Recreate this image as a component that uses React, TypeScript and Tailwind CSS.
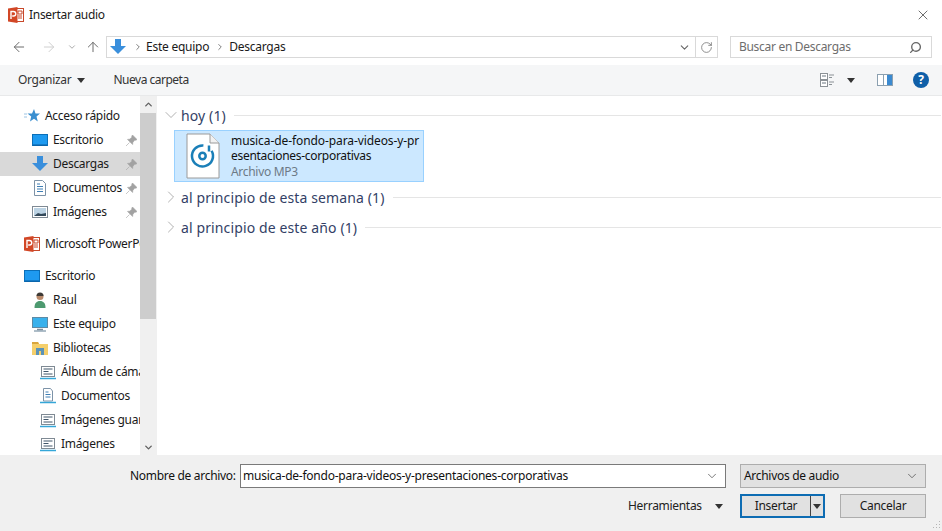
import React from 'react';
import { ArrowLeft, ArrowRight, ArrowUp, ChevronDown, ChevronUp, ChevronRight, RotateCw, Search, X } from 'lucide-react';

const font = { fontFamily: '"Noto Sans", "Liberation Sans", sans-serif' };

const Caret = ({ className = '' }: { className?: string }) => (
  <svg width="8" height="5" viewBox="0 0 8 5" className={`shrink-0 ${className}`}>
    <path d="M0 0h8L4 5z" fill="#333" />
  </svg>
);

const Ico = ({ children, size = 16 }: { children: React.ReactNode; size?: number }) => (
  <svg width={size} height={size} viewBox="0 0 16 16" className="shrink-0">
    {children}
  </svg>
);

const PptIcon = () => (
  <Ico>
    <rect x="7.500" y="1.500" width="8" height="13" fill="#fff" stroke="#c8482a" />
    <path d="M10 4h4v3h-4zM10 9h4M10 11h4" fill="none" stroke="#c8482a" />
    <path d="M0 1.500 9.500 0v16L0 14.500z" fill="#d24726" />
    <path d="M3 12V4.500h2.500a2 2 0 0 1 0 4.500H4.200" fill="none" stroke="#fff" strokeWidth="1.400" />
  </Ico>
);

const DownloadIcon = () => (
  <Ico>
    <path d="M5 0h6v7h5l-8 8-8-8h5z" fill="#3a8fdc" />
  </Ico>
);

const DesktopIcon = () => (
  <Ico>
    <rect x=".5" y="2.500" width="15" height="11" fill="#1e9af0" stroke="#0b6fb8" />
    <path d="M1 13h14" stroke="#0a5c9e" />
  </Ico>
);

const DocIcon = () => (
  <Ico>
    <path d="M2.500.500h8l3 3v12h-11z" fill="#fff" stroke="#7d93a8" />
    <path d="M5 4h3M5 6.500h6M5 9h6M5 11.500h6" stroke="#3f7fb5" />
  </Ico>
);

const PicIcon = () => (
  <Ico>
    <rect x=".5" y="2.500" width="15" height="11" fill="#fff" stroke="#7f8a94" />
    <rect x="2" y="4" width="12" height="8" fill="#bcd3e4" />
    <path d="M2 12l4-3 3 1 5-1v3z" fill="#34495a" />
  </Ico>
);

const LibItemIcon = ({ doc }: { doc?: boolean }) => (
  <Ico>
    {doc ? (
      <path d="M3.500.500h7l2 2.500v10h-9z" fill="#fff" stroke="#7d93a8" />
    ) : (
      <rect x="1.500" y="2.500" width="13" height="10" fill="#fff" stroke="#7f8a94" />
    )}
    {doc ? (
      <path d="M5.500 4h3M5.500 6.500h5M5.500 9h5" stroke="#3f7fb5" />
    ) : (
      <path d="M3.500 5h9M3.500 7.500h5M3.500 10h9" stroke="#40566a" />
    )}
    <path d="M0 14.500h16" stroke="#35a7d8" strokeWidth="1.500" />
  </Ico>
);

const StarIcon = () => (
  <Ico>
    <path d="M10 1l1.500 4.500H16l-3.500 3 1.300 5L10 10.800 6 13.500l1.200-5-3.700-3H8z" fill="#3a8fd0" />
    <path d="M0 6h3M0 9h3" stroke="#9cc4e4" />
  </Ico>
);

const UserIcon = () => (
  <Ico>
    <circle cx="8" cy="4.500" r="3.500" fill="#b98a6b" />
    <path d="M4.500 4a3.500 3.500 0 0 1 7 0z" fill="#3e3a36" />
    <path d="M2.500 16c0-5 2-7 5.500-7s5.500 2 5.500 7z" fill="#4d9a70" />
  </Ico>
);

const PcIcon = () => (
  <Ico>
    <rect x=".5" y="1.500" width="15" height="10" fill="#39b1ec" stroke="#5d8aa5" />
    <path d="M5 13.500h6" stroke="#7c8e9c" strokeWidth="1.500" />
    <path d="M2 15h12" stroke="#5f7c92" />
  </Ico>
);

const LibIcon = () => (
  <Ico>
    <path d="M0 2h6l1 2h9v11H0z" fill="#f5cf6b" />
    <path d="M0 2h6l1 2H0z" fill="#d9a63f" />
    <rect x="4" y="8" width="8" height="7" fill="#5b93b8" />
    <path d="M7 11h2v4H7z" fill="#f5cf6b" />
  </Ico>
);

const PinIcon = () => (
  <svg width="11" height="11" viewBox="0 0 11 11">
    <path d="M6.500 0 11 4.500 9.800 5.300 8.800 5 6.800 7.500 6.600 9.500 1.500 4.400 3.500 4.200 6 2.200 5.700 1.200zM3.500 7.500 0 11" fill="#a2a2a2" stroke="#a2a2a2" strokeWidth=".6" />
  </svg>
);

type NavRow = { label: string; icon: React.ReactNode; level: 0 | 1 | 2; pin?: boolean; active?: boolean; gap?: boolean };

const navRows: NavRow[] = [
  { label: 'Acceso rápido', icon: <StarIcon />, level: 0 },
  { label: 'Escritorio', icon: <DesktopIcon />, level: 1, pin: true },
  { label: 'Descargas', icon: <DownloadIcon />, level: 1, pin: true, active: true },
  { label: 'Documentos', icon: <DocIcon />, level: 1, pin: true },
  { label: 'Imágenes', icon: <PicIcon />, level: 1, pin: true },
  { label: 'Microsoft PowerPoint', icon: <PptIcon />, level: 0, gap: true },
  { label: 'Escritorio', icon: <DesktopIcon />, level: 0, gap: true },
  { label: 'Raul', icon: <UserIcon />, level: 1 },
  { label: 'Este equipo', icon: <PcIcon />, level: 1 },
  { label: 'Bibliotecas', icon: <LibIcon />, level: 1 },
  { label: 'Álbum de cámara', icon: <LibItemIcon />, level: 2 },
  { label: 'Documentos', icon: <LibItemIcon doc />, level: 2 },
  { label: 'Imágenes guardadas', icon: <LibItemIcon />, level: 2 },
  { label: 'Imágenes', icon: <LibItemIcon />, level: 2 },
];

const levelPad = { 0: 'pl-[24px]', 1: 'pl-[32px]', 2: 'pl-[40px]' };

const Group = ({ label, open }: { label: string; open?: boolean }) => (
  <div className="h-[30px] flex items-center">
    <span className="w-[10px] flex justify-center text-[#8a8a8a]">
      {open ? <ChevronDown size={20} strokeWidth={0.8} className="shrink-0" /> : <ChevronRight size={20} strokeWidth={0.8} className="shrink-0" />}
    </span>
    <span className="ml-[5px] text-[14px] text-[#333f66] tracking-[0.12px] whitespace-nowrap">{label}</span>
    <span className="flex-1 ml-[8px] h-px bg-[#e5e5e5]" />
  </div>
);

export default function App() {
  return (
    <div className="w-[942px] h-[531px] bg-white flex flex-col overflow-hidden text-[12px] text-[#1a1a1a] tracking-[-0.3px]" style={font}>
      {/* title */}
      <div className="h-[30px] flex items-center pl-[8px] pr-[11px] shrink-0">
        <PptIcon />
        <span className="ml-[5px]">Insertar audio</span>
        <X size={16} strokeWidth={1} className="ml-auto text-[#222]" />
      </div>

      {/* address row */}
      <div className="h-[35px] flex items-start pt-[6px] pl-[11px] pr-[10px] shrink-0">
        <div className="w-[95px] h-[22px] flex items-center text-[#6d6d6d]">
          <ArrowLeft size={16} strokeWidth={1.500} />
          <ArrowRight size={16} strokeWidth={1.500} className="ml-[14px] text-[#d0d0d0]" />
          <ChevronDown size={10} strokeWidth={2} className="ml-[10px] text-[#9a9a9a]" />
          <ArrowUp size={16} strokeWidth={1.500} className="ml-[8px]" />
        </div>
        <div className="w-[612px] h-[22px] border border-[#d9d9d9] flex items-center pl-[3px]">
          <DownloadIcon />
          <ChevronRight size={10} strokeWidth={2} className="ml-[7px] text-[#666]" />
          <span className="ml-[3px] tracking-[-0.25px]">Este equipo</span>
          <ChevronRight size={10} strokeWidth={2} className="ml-[6px] text-[#666]" />
          <span className="ml-[4px] tracking-[-0.25px]">Descargas</span>
          <ChevronDown size={13} strokeWidth={2} className="ml-auto mr-[4px] text-[#666]" />
          <div className="w-[22px] h-full border-l border-[#d9d9d9] flex items-center justify-center">
            <RotateCw size={13} strokeWidth={1.500} className="text-[#777]" />
          </div>
        </div>
        <div className="ml-[12px] w-[202px] h-[22px] border border-[#d9d9d9] flex items-center pl-[8px] pr-[9px] text-[#6d6d6d]">
          <span>Buscar en Descargas</span>
          <Search size={13} strokeWidth={2.500} className="ml-auto -scale-x-100 text-[#666]" />
        </div>
      </div>

      {/* toolbar */}
      <div className="h-[31px] bg-[#f5f6f7] border-b border-[#e8e9ea] flex items-center pl-[18px] pr-[13px] shrink-0 text-[#333]">
        <span>Organizar</span>
        <Caret className="ml-[6px]" />
        <span className="ml-[28px] tracking-[-0.5px]">Nueva carpeta</span>
        <svg width="14" height="14" viewBox="0 0 14 14" className="ml-auto">
          <rect x=".5" y=".5" width="7" height="6" fill="#fff" stroke="#8b9196" />
          <rect x=".5" y="7.500" width="7" height="6" fill="#fff" stroke="#8b9196" />
          <path d="M2 3h4M2 10h4" stroke="#6b7680" />
          <path d="M9 2h5M9 4.500h3M9 9h5M9 11.500h3" stroke="#8b9196" />
        </svg>
        <Caret className="ml-[13px]" />
        <svg width="16" height="12" viewBox="0 0 16 12" className="ml-[22px]">
          <rect x=".5" y=".5" width="15" height="11" fill="#fff" stroke="#8ba0b0" />
          <rect x="10" y="1" width="5" height="10" fill="#3b8ad0" />
          <path d="M6.500 1v10" stroke="#8ba0b0" />
        </svg>
        <span className="ml-[20px] w-[16px] h-[16px] rounded-full bg-[#0f5fa8] text-white font-bold text-[12px] leading-[16px] text-center">?</span>
      </div>

      {/* body */}
      <div className="flex-1 flex min-h-0">
        <div className="w-[157px] shrink-0 flex border-r border-[#f0f0f0] overflow-hidden">
          <div className="w-[140px] pt-[8px] shrink-0 overflow-hidden">
            {navRows.map((r, i) => (
              <div
                key={i}
                className={`relative h-[24px] flex items-center whitespace-nowrap overflow-hidden ${levelPad[r.level]} ${r.gap ? 'mt-[8px]' : ''} ${r.active ? 'bg-[#d9d9d9]' : ''}`}
              >
                {r.icon}
                <span className="ml-[5px]">{r.label}</span>
                {r.pin && (
                  <span className="absolute right-[3px] top-[7px]"><PinIcon /></span>
                )}
              </div>
            ))}
          </div>
          <div className="w-[16px] bg-[#f0f0f0] flex flex-col items-center justify-between shrink-0">
            <div className="h-[17px] w-full flex items-center justify-center">
              <ChevronUp size={11} strokeWidth={3} className="text-[#606060]" />
            </div>
            <div className="flex-1 w-full mb-[120px] bg-[#cdcdcd]" />
            <div className="h-[16px] w-full flex items-center justify-center">
              <ChevronDown size={11} strokeWidth={3} className="text-[#606060]" />
            </div>
          </div>
        </div>

        <div className="flex-1 pl-[9px] pr-[1px] pt-[4px]">
          <Group label="hoy (1)" open />
          <div className="ml-[8px] w-[250px] h-[52px] bg-[#cce8ff] border border-[#99d1ff] flex items-center pl-[11px]">
            <svg width="34" height="46" viewBox="0 0 34 46" className="shrink-0">
              <path d="M1 1h23l9 9v35H1z" fill="#fff" stroke="#9a9a9a" />
              <path d="M24 1v9h9" fill="#f2f2f2" stroke="#9a9a9a" />
              <path d="M25.600 17.750A10.500 10.500 0 1 1 17.400 12.500M23 12.500v6" fill="none" stroke="#1a7fb8" strokeWidth="2.500" />
              <circle cx="16.500" cy="23" r="3.200" fill="none" stroke="#1a7fb8" strokeWidth="2.500" />
            </svg>
            <div className="ml-[11px] w-[190px] leading-[15.500px] text-[#111]">
              <div className="tracking-[-0.09px] whitespace-nowrap">musica-de-fondo-para-videos-y-pr</div>
              <div className="tracking-[-0.3px] whitespace-nowrap">esentaciones-corporativas</div>
              <div className="text-[#6d7a86]">Archivo MP3</div>
            </div>
          </div>
          <Group label="al principio de esta semana (1)" />
          <Group label="al principio de este año (1)" />
        </div>
      </div>

      {/* footer */}
      <div className="relative h-[76px] bg-[#f0f0f0] shrink-0 pl-[130px] pr-[16px] pt-[9px]">
        <div className="flex items-center h-[24px]">
          <span className="w-[110px] text-[#111]">Nombre de archivo:</span>
          <div className="w-[486px] h-[24px] bg-white border border-[#7a7a7a] flex items-center pl-[2px] pr-[6px] text-[#111]">
            <span className="tracking-[-0.24px]">musica-de-fondo-para-videos-y-presentaciones-corporativas</span>
            <ChevronDown size={14} strokeWidth={1.200} className="ml-auto text-[#444]" />
          </div>
          <div className="ml-[14px] w-[186px] h-[24px] bg-[#e1e1e1] border border-[#adadad] flex items-center pl-[3px] pr-[6px] text-[#111]">
            <span>Archivos de audio</span>
            <ChevronDown size={14} strokeWidth={1.200} className="ml-auto text-[#444]" />
          </div>
        </div>
        <div className="flex items-center h-[24px] mt-[6px]">
          <span className="ml-[498px] w-[87px] text-[#222] whitespace-nowrap">Herramientas</span>
          <Caret />
          <div className="ml-[17px] w-[85px] h-[24px] bg-[#e1e1e1] border-2 border-[#0d6cb3] flex items-center">
            <span className="flex-1 text-center">Insertar</span>
            <span className="w-[13px] h-full border-l border-[#444] flex items-center justify-center">
              <Caret />
            </span>
          </div>
          <div className="ml-[15px] w-[86px] h-[24px] bg-[#e1e1e1] border border-[#adadad] flex items-center justify-center">
            Cancelar
          </div>
        </div>
        <svg width="10" height="10" viewBox="0 0 10 10" className="absolute right-[1px] bottom-[1px]">
          <path d="M8 1h1v1H8zM5 4h1v1H5zM8 4h1v1H8zM2 7h1v1H2zM5 7h1v1H5zM8 7h1v1H8z" fill="#b5b5b5" />
        </svg>
      </div>
    </div>
  );
}
